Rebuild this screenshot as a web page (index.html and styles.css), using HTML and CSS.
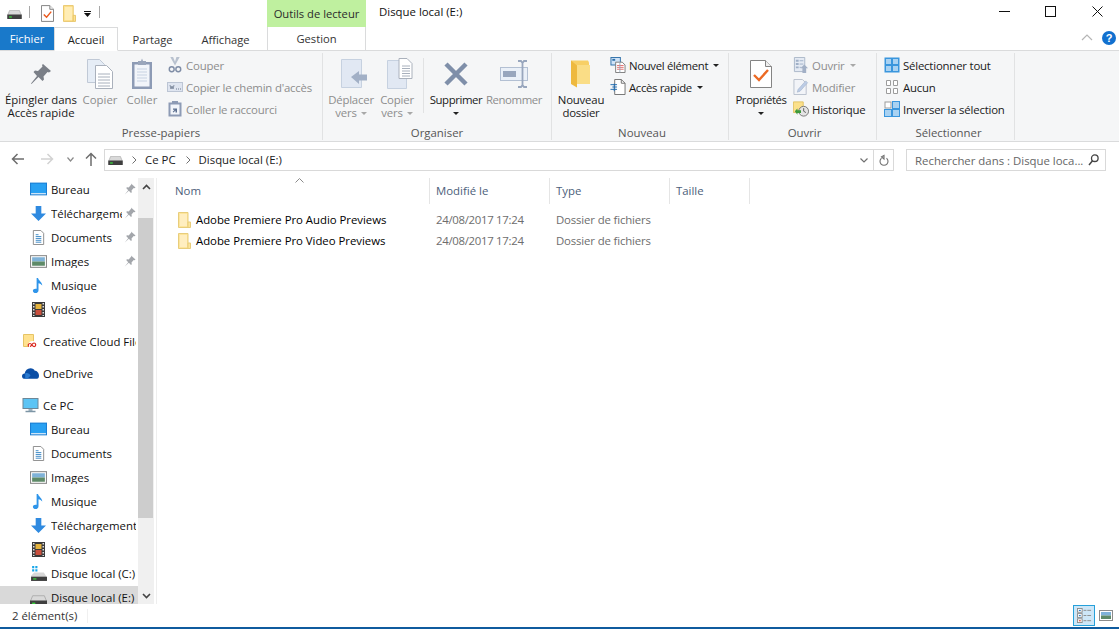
FILE: index.html
```html
<!DOCTYPE html>
<html lang="fr">
<head>
<meta charset="utf-8">
<title>Disque local (E:)</title>
<link rel="stylesheet" href="styles.css">
</head>
<body>
<svg class="sprite" xmlns="http://www.w3.org/2000/svg">
  <symbol id="drive" viewBox="0 0 16 10"><path d="M2.500 .5h11l2 5v4H.5v-4z" fill="#d9d9d9" stroke="#9a9a9a" stroke-width=".6"/><rect x="0" y="5" width="16" height="5" fill="#3f3f3f"/><rect x="2" y="7" width="3" height="1.500" fill="#38d13b"/></symbol>
  <symbol id="propsm" viewBox="0 0 14 18"><path d="M.5.5h9l4 4v13H.5z" fill="#fff" stroke="#7b7b7b"/><path d="M9.500.5v4h4" fill="#eee" stroke="#7b7b7b"/><path d="M3 10l3 3 5-6" fill="none" stroke="#ea5a1e" stroke-width="1.600"/></symbol>
  <symbol id="folder" viewBox="0 0 14 18"><path d="M.5.5h10.500v17H.5z" fill="#ffe28f" stroke="#e6c465"/><path d="M2 2h8v14H2z" fill="#ffedb5"/><path d="M11 11h2.500v6.500H11z" fill="#ffe28f" stroke="#e6c465"/></symbol>
  <symbol id="pin" viewBox="0 0 22 22"><path d="M13 1l8 7-2 1.500-1.500-.5-4 4.500.5 3-1.500 1.500-4-4-7 7-.5-.5 6-7.500-3.500-4 1.500-1.500 3 .5 4.500-4.500-.5-1.500z" fill="#7a7f87"/></symbol>
  <symbol id="pinsm" viewBox="0 0 12 12"><path d="M7 .5l4.500 4-1 .8-.8-.3-2.200 2.500.3 1.700-.8.800-2.200-2.200-4 3.700 3.400-4.200-2-2.200.8-.8 1.700.3L7.300 1.500z" fill="#a3a6ab"/></symbol>
  <symbol id="copy" viewBox="0 0 26 30"><path d="M.5.5h12l5 5v18H.5z" fill="#e6edf6" stroke="#c0c9d6"/><path d="M8.500 6.500h11l6 6v17h-17z" fill="#fff" stroke="#aab1bc"/><path d="M11 15h12M11 18h12M11 21h12M11 24h12M11 27h12" stroke="#a8b0bc"/></symbol>
  <symbol id="paste" viewBox="0 0 22 32"><path d="M1 4h20v27H1z" fill="#8d9bb5"/><path d="M3.500 6.500h15v22h-15z" fill="#f2f5fa"/><path d="M6 11h10M6 14h10M6 17h10M6 20h10M6 23h10" stroke="#c7d2e2"/><path d="M7 3h3l1-2.500 1 2.500h3v4H7z" fill="#9aa6bb"/></symbol>
  <symbol id="cut" viewBox="0 0 14 17"><path d="M2 0l5 9 5-9-3.500 0L7 5 5 0z" fill="#b9c2cf"/><circle cx="3.500" cy="13" r="2.600" fill="none" stroke="#7f8da6" stroke-width="1.500"/><circle cx="10.500" cy="13" r="2.600" fill="none" stroke="#7f8da6" stroke-width="1.500"/></symbol>
  <symbol id="path" viewBox="0 0 16 10"><rect x=".5" y=".5" width="15" height="9" fill="#dfe5f0" stroke="#bcc5d4"/><path d="M3 3l1 4 1-3 1 3 1-4" fill="none" stroke="#6f7b90" stroke-width=".8"/><path d="M9 7h1M11 7h1M13 7h1" stroke="#6f7b90"/></symbol>
  <symbol id="pastesm" viewBox="0 0 14 16"><path d="M.5 1.500h13v14H.5z" fill="#8d9bb5"/><path d="M2.500 3.500h9v10h-9z" fill="#f2f5fa"/><path d="M4 0h6v2.500H4z" fill="#8d9bb5"/><path d="M5 7.500h4v4H7.500V9.500L5.500 11.500l-.8-.8 2-2H5z" fill="#5d7090"/></symbol>
  <symbol id="move" viewBox="0 0 26 29"><path d="M.5.5h20v28H.5z" fill="#e1e8f3" stroke="#c6d1e0"/><path d="M10 18l8-6v3.500h8v6h-8V25z" fill="#a2b0c6"/></symbol>
  <symbol id="copyto" viewBox="0 0 26 31"><path d="M.5 2.500h19v28H.5z" fill="#e1e8f3" stroke="#c6d1e0"/><path d="M12 .5h8l5 5v15H12z" fill="#fff" stroke="#aab1bc"/><path d="M15 8h8M15 10.500h8M15 13h8M15 15.500h8M15 18h8" stroke="#a8b0bc"/></symbol>
  <symbol id="del" viewBox="0 0 26 26"><path d="M3 3l20 20M23 3L3 23" stroke="#7f8fa9" stroke-width="4.500" fill="none"/></symbol>
  <symbol id="ren" viewBox="0 0 29 28"><rect x=".5" y="7.500" width="27" height="13" fill="#eaf0f8" stroke="#b3c0d3"/><rect x="3" y="11" width="13" height="6" fill="#98a6bd"/><path d="M18 1h3l1.500 2L24 1h3M22.500 3v22M18 27h3l1.500-2 1.500 2h3" fill="none" stroke="#98a6bd" stroke-width="1.800"/></symbol>
  <symbol id="newfolder" viewBox="0 0 20 28"><path d="M0 .5h17l1 2v21H6z" fill="#f7cf66"/><path d="M0 .5l6 5v22L0 24z" fill="#eeb93f"/><path d="M6 5h13v19H6z" fill="#fadd86"/></symbol>
  <symbol id="newitem" viewBox="0 0 16 17"><rect x=".5" y=".5" width="10" height="8" fill="#cfe3f7" stroke="#2d6fa8"/><rect x="2" y="2" width="3" height="2" fill="#2d6fa8"/><path d="M5.500 5.500h7l3 3v8h-10z" fill="#fff" stroke="#7b7b7b"/><path d="M7 9h7M7 11h7M7 13h7" stroke="#e26b6b"/><path d="M10 5.500v11" stroke="#9ab"/></symbol>
  <symbol id="quick" viewBox="0 0 16 17"><path d="M4.500.5h7l4 4v12h-11z" fill="#fff" stroke="#6f6f6f"/><path d="M11.500.5v4h4" fill="none" stroke="#6f6f6f"/><path d="M0 6h7M2 8.500h5M0 11h7M4 5v8" stroke="#1e6bb0" fill="none"/></symbol>
  <symbol id="props" viewBox="0 0 22 28"><path d="M.5.500h15l6 6v21H.5z" fill="#fff" stroke="#848484"/><path d="M15.500.5v6h6" fill="#eee" stroke="#848484"/><path d="M4 15l5 5 9-10" fill="none" stroke="#ec6a24" stroke-width="2.400"/></symbol>
  <symbol id="open" viewBox="0 0 15 17"><path d="M.5.5h11v15H.5z" fill="#e4eaf3" stroke="#aab6c8"/><path d="M2 3h3v2H2zM2 6.500h3v2H2zM2 10h3v2H2z" fill="#9fb0c7"/><path d="M6 4h4M6 7.500h4M6 11h2" stroke="#9fb0c7"/><path d="M11 8l4 4h-2v5h-4v-5H7z" fill="#a2b0c6"/></symbol>
  <symbol id="edit" viewBox="0 0 16 17"><path d="M.5.5h9l4 4v12H.5z" fill="#f2f4f8" stroke="#b7bfcc"/><path d="M4 14l1-3 8-9 2 2-8 9z" fill="#bccce6" stroke="#9fb0c7" stroke-width=".6"/></symbol>
  <symbol id="hist" viewBox="0 0 18 17"><path d="M.5.500h11v12H.5z" fill="#fbe08b" stroke="#dfc060"/><circle cx="12" cy="11" r="5.500" fill="#e4e4e4" stroke="#6f6f6f"/><path d="M12 7.500V11l2.500 1.500" fill="none" stroke="#555"/><path d="M2 11l3-3v2h4v3H5v2z" fill="#3c9a3c"/></symbol>
  <symbol id="selall" viewBox="0 0 16 16"><rect x=".5" y=".5" width="15" height="15" fill="#3a96dd"/><rect x="2" y="2" width="5" height="5" fill="#a9d2f2"/><rect x="9" y="2" width="5" height="5" fill="#a9d2f2"/><rect x="2" y="9" width="5" height="5" fill="#a9d2f2"/><rect x="9" y="9" width="5" height="5" fill="#a9d2f2"/></symbol>
  <symbol id="selnone" viewBox="0 0 16 16"><path d="M2.500 1.500h4v5h-4zM9.500 1.500h4v5h-4zM2.500 9.500h4v5h-4zM9.500 9.500h4v5h-4z" fill="#fff" stroke="#9c9c9c"/></symbol>
  <symbol id="selinv" viewBox="0 0 16 16"><rect x="1" y="1" width="6" height="6" fill="#fff" stroke="#9c9c9c"/><rect x=".5" y="8.500" width="7" height="7" fill="#a9d2f2" stroke="#3a96dd"/><rect x="8.500" y=".5" width="7" height="7" fill="#a9d2f2" stroke="#3a96dd"/><rect x="8.500" y="8.500" width="7" height="7" fill="#a9d2f2" stroke="#3a96dd"/></symbol>
  <symbol id="desk" viewBox="0 0 16 13"><rect width="16" height="12" fill="#1b7fd4"/><path d="M1 1h14v9H1z" fill="#29a1f2"/><path d="M1 10h14v1H1z" fill="#fff"/></symbol>
  <symbol id="down" viewBox="0 0 16 16"><path d="M5 0h6v8h5l-8 8-8-8h5z" fill="#2f8ae0"/></symbol>
  <symbol id="docs" viewBox="0 0 12 16"><path d="M.5.500h8l3 3v12H.5z" fill="#fff" stroke="#8a8a8a"/><path d="M3 5h3M3 7h6M3 9h6M3 11h6M3 13h6" stroke="#3b87c4"/></symbol>
  <symbol id="pics" viewBox="0 0 16 12"><rect x=".5" y=".5" width="15" height="11" fill="#fff" stroke="#8a8a8a"/><rect x="2" y="2" width="12" height="4" fill="#7fb2d8"/><rect x="2" y="6" width="12" height="4" fill="#5e8a68"/></symbol>
  <symbol id="music" viewBox="0 0 12 16"><path d="M4 0h1.500c.5 3 4.500 4 4.500 8-1-1.500-2.500-2.500-4-2.500V13c0 2-1.500 3-3 3s-3-1-3-2.500S1.800 11 4 11.500z" fill="#2f95ea"/></symbol>
  <symbol id="video" viewBox="0 0 13 15"><rect width="13" height="15" fill="#3a3a3a"/><path d="M1 1h1.500v1.500H1zM1 4h1.500v1.500H1zM1 7h1.500v1.500H1zM1 10h1.500v1.500H1zM1 13h1.500v1H1zM10.500 1H12v1.500h-1.500zM10.500 4H12v1.500h-1.500zM10.500 7H12v1.500h-1.500zM10.500 10H12v1.500h-1.500zM10.500 13H12v1h-1.500z" fill="#dedede"/><rect x="3.500" y="2" width="6" height="5" fill="#e3b23c"/><rect x="3.500" y="8" width="6" height="5" fill="#c94f3d"/></symbol>
  <symbol id="cc" viewBox="0 0 15 15"><path d="M.5.500h10v12H.5z" fill="#ffe28f" stroke="#e6c465"/><circle cx="9.500" cy="11" r="4" fill="#fff"/><path d="M6 12.500c-1.500-.8-.8-3 1-3s2.500 3.500 4.500 3c1.800-.5 1.500-3.500-.5-3.500s-2.500 3.500-4 3.500" fill="none" stroke="#d9281e" stroke-width="1.200"/></symbol>
  <symbol id="cloud" viewBox="0 0 16 10"><path d="M3 10C1 10 0 9 0 7.500S1 5 2.500 5C3 2 5 0 8 0c2 0 3.500 1 4 2.500 2 0 4 2 4 4.500 0 2-1 3-3 3z" fill="#0a4ea6"/><path d="M3 5c2-1 4 0 5 2l-3 3H3z" fill="#2a7ad0"/></symbol>
  <symbol id="pc" viewBox="0 0 16 15"><rect x=".5" y=".5" width="15" height="10" fill="#5cc4f4" stroke="#6c8798"/><path d="M6 11h4v2H6z" fill="#9fb3bf"/><path d="M3 13.500h10" stroke="#7c95a5" stroke-width="1.500"/></symbol>
  <symbol id="sysdrive" viewBox="0 0 16 14"><path d="M2 0h2v2H2zM5 0h2v2H5zM2 3h2v2H2zM5 3h2v2H5z" fill="#19a7ea"/><path d="M4 6h9l2 3v5H1V9z" fill="#d7d7d7"/><rect x="1" y="10" width="15" height="4" fill="#3f3f3f"/><rect x="3" y="11.500" width="3" height="1.200" fill="#38d13b"/></symbol>
  <symbol id="lfolder" viewBox="0 0 13 16"><path d="M.5.500h9.500v15H.5z" fill="#fde59c" stroke="#e8cd7b"/><path d="M2 2h7v12H2z" fill="#ffeec0"/><path d="M10 10h2.500v5.500H10z" fill="#fde59c" stroke="#e8cd7b"/></symbol>
  <symbol id="details" viewBox="0 0 16 16"><rect x=".5" y=".5" width="5" height="4" fill="#fff" stroke="#8c8c8c"/><rect x=".5" y="6" width="5" height="4" fill="#fff" stroke="#8c8c8c"/><rect x=".5" y="11.500" width="5" height="4" fill="#fff" stroke="#8c8c8c"/><path d="M2 2h2v1.200H2z" fill="#2b7cc4"/><path d="M2 7.500h2v1.200H2z" fill="#2b7cc4"/><path d="M2 13h2v1.200H2z" fill="#d8402c"/><path d="M7 2.500h3M11 2.500h4M7 8h3M11 8h4M7 13.500h3M11 13.500h4" stroke="#8c8c8c"/></symbol>
  <symbol id="thumbs" viewBox="0 0 14 11"><rect x=".5" y=".5" width="13" height="10" fill="#fff" stroke="#8c8c8c"/><rect x="2" y="2" width="10" height="3.500" fill="#7fb2d8"/><rect x="2" y="5.500" width="10" height="3.500" fill="#5e8a68"/></symbol>
</svg>

<div class="window">
  <header class="titlebar">
    <div class="qat">
      <svg class="q-drive"><use href="#drive"/></svg>
      <span class="q-sep"></span>
      <svg class="q-prop"><use href="#propsm"/></svg>
      <svg class="q-folder"><use href="#folder"/></svg>
      <svg class="q-more" width="7" height="6"><path d="M0 .5h7" stroke="#111"/><path d="M0 2h7L3.500 6z" fill="#111"/></svg>
      <span class="q-sep q-sep2"></span>
    </div>
    <div class="context-label">Outils de lecteur</div>
    <div class="win-title">Disque local (E:)</div>
    <div class="win-controls">
      <span class="win-btn"><svg width="11" height="11"><path d="M0 5.500h11" stroke="#111"/></svg></span>
      <span class="win-btn"><svg width="11" height="11"><rect x=".5" y=".5" width="10" height="10" fill="none" stroke="#111"/></svg></span>
      <span class="win-btn"><svg width="11" height="11"><path d="M.5.500l10 10M10.500.5l-10 10" stroke="#111" fill="none"/></svg></span>
    </div>
  </header>

  <nav class="tabs">
    <span class="tab tab-file">Fichier</span>
    <span class="tab tab-active">Accueil</span>
    <span class="tab tab-share">Partage</span>
    <span class="tab tab-view">Affichage</span>
    <span class="tab tab-manage">Gestion</span>
    <span class="tabs-right">
      <svg width="12" height="7"><path d="M1 6l5-5 5 5" fill="none" stroke="#b5b5b5" stroke-width="1.200"/></svg>
      <span class="help">?</span>
    </span>
  </nav>

  <section class="ribbon">
    <div class="group g-clip">
      <div class="group-body">
        <div class="big w-pin"><span class="big-icon"><svg class="s22-22"><use href="#pin"/></svg></span><span class="lbl lbl-wide">Épingler dans<br>Accès rapide</span></div>
        <div class="big w-copy off"><span class="big-icon"><svg class="s26-30"><use href="#copy"/></svg></span><span class="lbl lbl-wide">Copier</span></div>
        <div class="big w-paste off"><span class="big-icon"><svg class="s22-32"><use href="#paste"/></svg></span><span class="lbl lbl-wide">Coller</span></div>
        <div class="small-col sc-clip off">
          <div class="small"><svg class="si"><use href="#cut"/></svg>Couper</div>
          <div class="small"><svg class="si"><use href="#path"/></svg>Copier le chemin d'accès</div>
          <div class="small"><svg class="si"><use href="#pastesm"/></svg>Coller le raccourci</div>
        </div>
      </div>
      <div class="group-label">Presse-papiers</div>
    </div>

    <div class="group g-org">
      <div class="group-body">
        <div class="big w-move off"><span class="big-icon"><svg class="s26-29"><use href="#move"/></svg></span><span class="lbl">Déplacer<br>vers<i class="caret caret-off"></i></span></div>
        <div class="big w-cto off"><span class="big-icon"><svg class="s26-31"><use href="#copyto"/></svg></span><span class="lbl">Copier<br>vers<i class="caret caret-off"></i></span></div>
        <span class="inner-sep"></span>
        <div class="big w-del"><span class="big-icon"><svg class="s26-26"><use href="#del"/></svg></span><span class="lbl lbl-tight">Supprimer<br><i class="caret caret-solo"></i></span></div>
        <div class="big w-ren off"><span class="big-icon"><svg class="s29-28"><use href="#ren"/></svg></span><span class="lbl lbl-tight">Renommer</span></div>
      </div>
      <div class="group-label">Organiser</div>
    </div>

    <div class="group g-new">
      <div class="group-body">
        <div class="big w-newf"><span class="big-icon"><svg class="s20-28"><use href="#newfolder"/></svg></span><span class="lbl">Nouveau<br>dossier</span></div>
        <div class="small-col sc-new">
          <div class="small small-tight"><svg class="si"><use href="#newitem"/></svg>Nouvel élément<i class="caret caret-gap"></i></div>
          <div class="small small-tight"><svg class="si"><use href="#quick"/></svg>Accès rapide<i class="caret caret-gap"></i></div>
        </div>
      </div>
      <div class="group-label">Nouveau</div>
    </div>

    <div class="group g-open">
      <div class="group-body">
        <div class="big w-prop"><span class="big-icon"><svg class="s22-28"><use href="#props"/></svg></span><span class="lbl lbl-tight">Propriétés<br><i class="caret caret-solo"></i></span></div>
        <div class="small-col sc-open">
          <div class="small off"><svg class="si"><use href="#open"/></svg>Ouvrir<i class="caret caret-off caret-gap"></i></div>
          <div class="small off"><svg class="si"><use href="#edit"/></svg>Modifier</div>
          <div class="small"><svg class="si"><use href="#hist"/></svg>Historique</div>
        </div>
      </div>
      <div class="group-label">Ouvrir</div>
    </div>

    <div class="group g-sel">
      <div class="group-body">
        <div class="small-col">
          <div class="small"><svg class="si"><use href="#selall"/></svg>Sélectionner tout</div>
          <div class="small"><svg class="si"><use href="#selnone"/></svg>Aucun</div>
          <div class="small"><svg class="si"><use href="#selinv"/></svg>Inverser la sélection</div>
        </div>
      </div>
      <div class="group-label">Sélectionner</div>
    </div>
  </section>

  <div class="addressrow">
    <div class="navbtns">
      <svg class="nb-back" width="14" height="12"><path d="M13 6H2M6.500 1L1.500 6l5 5" fill="none" stroke="#6d6d6d" stroke-width="1.500"/></svg>
      <svg class="nb-fwd" width="14" height="12"><path d="M1 6h11M7.500 1l5 5-5 5" fill="none" stroke="#d2d2d2" stroke-width="1.500"/></svg>
      <svg class="nb-hist" width="7" height="5"><path d="M.5.500L3.500 4l3-3.500" fill="none" stroke="#8a8a8a" stroke-width="1.200"/></svg>
      <svg class="nb-up" width="12" height="14"><path d="M6 14V2M1 6.500l5-5 5 5" fill="none" stroke="#6d6d6d" stroke-width="1.500"/></svg>
    </div>
    <div class="addrbox">
      <svg class="ad-drive"><use href="#drive"/></svg>
      <svg class="ad-chev" width="5" height="8"><path d="M.5.500l3.500 3.500-3.500 3.500" fill="none" stroke="#707070"/></svg>
      <span class="crumb">Ce PC</span>
      <svg class="ad-chev" width="5" height="8"><path d="M.5.500l3.500 3.500-3.500 3.500" fill="none" stroke="#707070"/></svg>
      <span class="crumb">Disque local (E:)</span>
      <span class="addr-end">
        <svg width="8" height="5"><path d="M.5.500l3.500 3.500 3.500-3.500" fill="none" stroke="#707070" stroke-width="1.200"/></svg>
        <span class="addr-sep"></span>
        <svg width="10" height="13"><path d="M7.500 4.200a4 4 0 1 1-5 0M5 1.500v3.500L2.500 2.800z" fill="none" stroke="#707070" stroke-width="1.100"/></svg>
      </span>
    </div>
    <div class="searchbox">
      <span class="search-text">Rechercher dans : Disque loca...</span>
      <svg width="11" height="12"><circle cx="6.800" cy="4.200" r="3.300" fill="none" stroke="#444" stroke-width="1.300"/><path d="M4.500 6.800L1 11" stroke="#444" stroke-width="1.500"/></svg>
    </div>
  </div>

  <main class="main">
    <aside class="nav">
      <div class="nav-list">
        <div class="nr child"><svg class="ni"><use href="#desk"/></svg><span class="nm nm-pin">Bureau</span><svg class="np"><use href="#pinsm"/></svg></div>
        <div class="nr child"><svg class="ni"><use href="#down"/></svg><span class="nm nm-pin">Téléchargements</span><svg class="np"><use href="#pinsm"/></svg></div>
        <div class="nr child"><svg class="ni"><use href="#docs"/></svg><span class="nm nm-pin">Documents</span><svg class="np"><use href="#pinsm"/></svg></div>
        <div class="nr child"><svg class="ni"><use href="#pics"/></svg><span class="nm nm-pin">Images</span><svg class="np"><use href="#pinsm"/></svg></div>
        <div class="nr child"><svg class="ni"><use href="#music"/></svg><span class="nm">Musique</span></div>
        <div class="nr child"><svg class="ni"><use href="#video"/></svg><span class="nm">Vidéos</span></div>
        <div class="nr top gap"><svg class="ni"><use href="#cc"/></svg><span class="nm">Creative Cloud Files</span></div>
        <div class="nr top gap"><svg class="ni"><use href="#cloud"/></svg><span class="nm">OneDrive</span></div>
        <div class="nr top gap"><svg class="ni"><use href="#pc"/></svg><span class="nm">Ce PC</span></div>
        <div class="nr child"><svg class="ni"><use href="#desk"/></svg><span class="nm">Bureau</span></div>
        <div class="nr child"><svg class="ni"><use href="#docs"/></svg><span class="nm">Documents</span></div>
        <div class="nr child"><svg class="ni"><use href="#pics"/></svg><span class="nm">Images</span></div>
        <div class="nr child"><svg class="ni"><use href="#music"/></svg><span class="nm">Musique</span></div>
        <div class="nr child"><svg class="ni"><use href="#down"/></svg><span class="nm">Téléchargements</span></div>
        <div class="nr child"><svg class="ni"><use href="#video"/></svg><span class="nm">Vidéos</span></div>
        <div class="nr child"><svg class="ni"><use href="#sysdrive"/></svg><span class="nm">Disque local (C:)</span></div>
        <div class="nr child selected"><svg class="ni"><use href="#drive"/></svg><span class="nm">Disque local (E:)</span></div>
      </div>
      <div class="scrollbar">
        <div class="sb-up"><svg width="9" height="6"><path d="M1 5l3.500-3.500L8 5" fill="none" stroke="#444" stroke-width="1.600"/></svg></div>
        <div class="sb-thumb"></div>
        <div class="sb-rest"></div>
        <div class="sb-down"><svg width="9" height="6"><path d="M1 1l3.500 3.500L8 1" fill="none" stroke="#444" stroke-width="1.600"/></svg></div>
      </div>
    </aside>
    <section class="content">
      <div class="cols head">
        <span class="hc hc-name">Nom<svg class="sort" width="9" height="5"><path d="M.5 4.500l4-4 4 4" fill="none" stroke="#8a8a8a"/></svg></span>
        <span class="hc">Modifié le</span>
        <span class="hc">Type</span>
        <span class="hc">Taille</span>
      </div>
      <div class="cols file">
        <span class="fname"><svg class="fi"><use href="#lfolder"/></svg>Adobe Premiere Pro Audio Previews</span>
        <span class="fmeta fdate">24/08/2017 17:24</span>
        <span class="fmeta ftype">Dossier de fichiers</span>
        <span></span>
      </div>
      <div class="cols file">
        <span class="fname"><svg class="fi"><use href="#lfolder"/></svg>Adobe Premiere Pro Video Previews</span>
        <span class="fmeta fdate">24/08/2017 17:24</span>
        <span class="fmeta ftype">Dossier de fichiers</span>
        <span></span>
      </div>
    </section>
  </main>

  <footer class="status">
    <span class="count">2 élément(s)</span>
    <span class="status-sep"></span>
    <span class="views">
      <span class="view view-on"><svg class="v-det"><use href="#details"/></svg></span>
      <span class="view"><svg class="v-thumb"><use href="#thumbs"/></svg></span>
    </span>
  </footer>
  <div class="bottomline"></div>
</div>
</body>
</html>
```
FILE: styles.css
```css
* { box-sizing: border-box; }
html, body { margin: 0; padding: 0; height: 100%; overflow: hidden; background: #fff; }
body { font: 11.4px/13px "Open Sans", "Noto Sans", sans-serif; color: #1a1a1a; }
.sprite { display: none; }
svg { display: block; flex: none; }

.window { width: 1119px; height: 629px; display: flex; flex-direction: column; }

/* title bar */
.titlebar { height: 27px; display: flex; flex: none; }
.qat { width: 267px; display: flex; align-items: center; padding-left: 7px; }
.q-drive { width: 15px; height: 9px; margin-top: 1px; }
.q-sep { width: 1px; height: 12px; background: #a8a8a8; margin: 0 0 3px 7px; }
.q-prop { width: 13px; height: 17px; margin: 0 0 1px 11px; }
.q-folder { width: 13px; height: 17px; margin: 0 0 1px 9px; }
.q-more { margin: 1px 0 0 8px; }
.q-sep2 { margin-left: 8px; }
.context-label { width: 99px; background: #bff09f; text-align: center; line-height: 28px; font-size: 11.2px; color: #2b2b2b; }
.win-title { padding-left: 13px; line-height: 24px; color: #111; }
.win-controls { margin-left: auto; display: flex; }
.win-btn { width: 46px; height: 24px; display: flex; align-items: center; justify-content: center; margin-top: -1px; }
.win-btn:first-child { padding-left: 1px; }
.win-btn:last-child { padding-left: 2px; }

/* tabs */
.tabs { height: 24px; flex: none; display: flex; border-bottom: 1px solid #dadbdc; font-size: 11.2px; }
.tab { display: flex; align-items: center; height: 24px; color: #333; justify-content: center; }
.tab-file { width: 54px; height: 23px; background: #1979ca; color: #fff; }
.tab-active { width: 64px; background: #fff; border: 1px solid #dadbdc; border-bottom: 1px solid #fff; color: #222; }
.tab-share { width: 69px; }
.tab-view { width: 80px; padding-right: 3px; }
.tab-manage { width: 99px; height: 23px; border-left: 1px solid #dadbdc; border-right: 1px solid #dadbdc; }
.tabs-right { margin-left: auto; display: flex; align-items: center; gap: 9px; padding: 0 3px 2px 0; }
.help { width: 14px; height: 14px; border-radius: 50%; background: #1170cf; color: #fff; font: bold 11px/14px "Liberation Sans", sans-serif; text-align: center; }

/* ribbon */
.ribbon { height: 91px; flex: none; display: flex; background: #f5f6f7; border-bottom: 1px solid #dadbdc; padding-top: 2px; letter-spacing: -.2px; }
.group { display: flex; flex-direction: column; border-right: 1px solid #e1e2e3; height: 87px; }
.group-body { height: 72px; display: flex; }
.group-label { height: 13px; text-align: center; color: #555; line-height: 13px; padding-top: 1px; letter-spacing: 0; }
.g-clip { width: 323px; }
.g-org { width: 229px; }
.g-new { width: 177px; }
.g-open { width: 148px; }
.g-sel { width: 138px; padding-left: 6px; }
.g-new, .g-open { padding-left: 4px; }

.big { display: flex; flex-direction: column; align-items: center; flex: none; white-space: nowrap; text-align: center; }
.big-icon { height: 39px; display: flex; align-items: center; justify-content: center; margin-top: 1px; }
.lbl { display: block; line-height: 13px; color: #1a1a1a; }
.lbl-wide { letter-spacing: 0; }
.lbl-tight { letter-spacing: -.4px; }
.off .lbl, .off.small, .off .small { color: #8d8d8d; }
.w-pin { width: 82px; }
.w-copy { width: 36px; }
.w-paste { width: 48px; }
.w-move { width: 56px; }
.w-cto { width: 36px; }
.w-del { width: 56px; }
.w-ren { width: 56px; margin-left: 2px; }
.w-newf { width: 50px; }
.w-prop { width: 56px; }
.inner-sep { width: 1px; height: 55px; background: #e1e2e3; margin: 5px 4px 0 8px; flex: none; }
.small-col { display: flex; flex-direction: column; padding: 1px 0 0 1px; white-space: nowrap; }
.small { height: 22px; display: flex; align-items: center; color: #1a1a1a; }
.small-tight { letter-spacing: -.35px; }
.si { width: 16px; height: 16px; margin-right: 3px; }
.sc-new { margin-left: 3px; }
.sc-open { margin-left: 3px; }
.caret { display: inline-block; width: 0; height: 0; border: 3px solid transparent; border-top: 3px solid #222; border-bottom: 0; vertical-align: 2px; margin-left: 4px; }
.caret-off { border-top-color: #a8a8a8; }
.caret-solo { margin-left: 0; }
.caret-gap { margin-left: 5px; }

.s22-22 { width: 22px; height: 22px; }
.s26-30 { width: 26px; height: 30px; }
.s22-32 { width: 22px; height: 32px; }
.s26-29 { width: 26px; height: 29px; margin-left: 5px; }
.s26-31 { width: 26px; height: 31px; margin-left: 5px; }
.s26-26 { width: 26px; height: 26px; }
.s29-28 { width: 29px; height: 28px; }
.s20-28 { width: 20px; height: 28px; }
.s22-28 { width: 22px; height: 28px; }

/* address row */
.addressrow { height: 36px; flex: none; display: flex; align-items: flex-start; padding-top: 7px; }
.navbtns { width: 104px; height: 20px; display: flex; align-items: center; }
.nb-back { margin-left: 11px; }
.nb-fwd { margin-left: 15px; }
.nb-hist { margin-left: 13px; }
.nb-up { margin-left: 11px; }
.addrbox { width: 790px; height: 22px; border: 1px solid #d9d9d9; display: flex; align-items: center; }
.ad-drive { width: 15px; height: 9px; margin: 1px 0 0 3px; }
.ad-chev { margin-left: 9px; }
.ad-chev + .crumb { margin-left: 8px; padding-bottom: 2px; }
.crumb + .ad-chev { margin-left: 10px; }
.crumb { color: #1a1a1a; }
.addr-end { margin-left: auto; display: flex; align-items: center; gap: 5px; padding-right: 4px; }
.addr-sep { width: 1px; height: 20px; background: #d9d9d9; }
.searchbox { width: 200px; height: 22px; margin-left: 12px; border: 1px solid #d9d9d9; display: flex; align-items: center; justify-content: space-between; padding: 0 6px 0 8px; color: #666; }

/* main */
.main { height: 426px; flex: none; display: flex; }
.nav { width: 157px; flex: none; display: flex; border-right: 1px solid #eeeeee; padding-right: 2px; }
.nav-list { width: 138px; height: 426px; overflow: hidden; flex: none; }
.nr { height: 24px; display: flex; align-items: center; padding: 0 2px 2px 0; }
.nr.child { padding-left: 30px; }
.nr.top { padding-left: 22px; }
.nr.gap { margin-top: 8px; }
.nr.selected { background: #d9d9d9; }
.ni { width: 17px; height: 15px; margin-right: 4px; }
.nr.selected .ni { margin-top: 3px; margin-bottom: -3px; }
.nm { flex: 1; min-width: 0; overflow: hidden; white-space: nowrap; color: #111; }
.nm-pin { flex: none; width: 71px; }
.np { width: 12px; height: 12px; margin-left: 2px; }
.scrollbar { width: 16px; display: flex; flex-direction: column; background: #f0f0f0; flex: none; }
.sb-up { height: 40px; display: flex; justify-content: center; padding-top: 6px; }
.sb-thumb { height: 300px; width: 15px; background: #cdcdcd; }
.sb-rest { flex: 1; }
.sb-down { height: 17px; display: flex; justify-content: center; padding-top: 6px; }

.content { flex: 1; min-width: 0; }
.cols { display: grid; grid-template-columns: 273px 120px 120px 80px; }
.head { height: 25px; margin-bottom: 7px; }
.hc { position: relative; border-right: 1px solid #e5e5e5; padding-left: 6px; line-height: 26px; color: #4c607a; }
.hc-name { padding-left: 18px; }
.sort { position: absolute; left: 138px; top: 0; }
.file { height: 21px; align-items: center; padding-bottom: 2px; }
.fname { display: flex; align-items: center; padding-left: 21px; color: #000; white-space: nowrap; letter-spacing: -.03px; }
.fi { width: 13px; height: 16px; margin: 1px 5px 0 0; }
.fmeta { padding-left: 6px; color: #6d6d6d; white-space: nowrap; }
.fdate { letter-spacing: -.3px; }
.ftype { letter-spacing: -.15px; }

/* status */
.status { height: 23px; flex: none; display: flex; align-items: center; padding-left: 12px; color: #333; }
.count { width: 75px; }
.status-sep { width: 1px; height: 14px; background: #f0f0f0; }
.views { margin-left: auto; display: flex; align-items: center; padding-right: 6px; }
.view { height: 21px; display: flex; align-items: center; justify-content: center; }
.view-on { width: 22px; background: #cde6f7; border: 1px solid #26a0da; margin-right: 4px; }
.v-det { width: 15px; height: 15px; }
.v-thumb { width: 14px; height: 11px; }
.bottomline { height: 2px; flex: none; background: #0f5b9e; }
```
